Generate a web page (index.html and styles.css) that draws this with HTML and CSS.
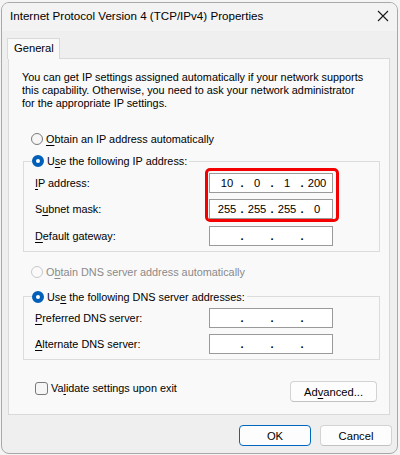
FILE: index.html
```html
<!DOCTYPE html>
<html>
<head>
<meta charset="utf-8">
<link rel="stylesheet" href="styles.css">
</head>
<body>
<div class="window">
  <div class="titlebar">
    <span class="title">Internet Protocol Version 4 (TCP/IPv4) Properties</span>
    <svg class="close" width="12" height="12" viewBox="0 0 12 12"><path d="M1 1L11 11M11 1L1 11" stroke="#1a1a1a" stroke-width="1.1" fill="none"/></svg>
  </div>
  <div class="body">
    <div class="tabs"><div class="tab">General</div></div>
    <div class="panel">
      <p class="intro">You can get IP settings assigned automatically if your network supports<br>this capability. Otherwise, you need to ask your network administrator<br>for the appropriate IP settings.</p>
      <div class="option first"><span class="radio"></span><span><u>O</u>btain an IP address automatically</span></div>
      <fieldset class="group ipgroup">
        <legend class="option"><span class="radio checked"></span><span>U<u>s</u>e the following IP address:</span></legend>
        <div class="row"><span class="label"><u>I</u>P address:</span><div class="ip"><span class="seg">10</span><span class="dot">.</span><span class="seg">0</span><span class="dot">.</span><span class="seg">1</span><span class="dot">.</span><span class="seg">200</span></div></div>
        <div class="row"><span class="label">S<u>u</u>bnet mask:</span><div class="ip"><span class="seg">255</span><span class="dot">.</span><span class="seg">255</span><span class="dot">.</span><span class="seg">255</span><span class="dot">.</span><span class="seg">0</span></div></div>
        <div class="row"><span class="label"><u>D</u>efault gateway:</span><div class="ip"><span class="seg"></span><span class="dot">.</span><span class="seg"></span><span class="dot">.</span><span class="seg"></span><span class="dot">.</span><span class="seg"></span></div></div>
        <div class="highlight"></div>
      </fieldset>
      <div class="option disabled dnsauto"><span class="radio"></span><span>O<u>b</u>tain DNS server address automatically</span></div>
      <fieldset class="group dnsgroup">
        <legend class="option"><span class="radio checked"></span><span>Us<u>e</u> the following DNS server addresses:</span></legend>
        <div class="row"><span class="label"><u>P</u>referred DNS server:</span><div class="ip"><span class="seg"></span><span class="dot">.</span><span class="seg"></span><span class="dot">.</span><span class="seg"></span><span class="dot">.</span><span class="seg"></span></div></div>
        <div class="row"><span class="label"><u>A</u>lternate DNS server:</span><div class="ip"><span class="seg"></span><span class="dot">.</span><span class="seg"></span><span class="dot">.</span><span class="seg"></span><span class="dot">.</span><span class="seg"></span></div></div>
      </fieldset>
      <div class="bottomrow">
        <div class="check"><span class="box"></span><span>Va<u>l</u>idate settings upon exit</span></div>
        <div class="btn adv">Ad<u>v</u>anced...</div>
      </div>
    </div>
    <div class="buttons">
      <div class="btn default">OK</div>
      <div class="btn">Cancel</div>
    </div>
  </div>
</div>
</body>
</html>
```
FILE: styles.css
```css
html, body {
  margin: 0;
  padding: 0;
  background: #f4f4f4;
}
body {
  font-family: "Liberation Sans", Arial, sans-serif;
  font-size: 10.85px;
  color: #000;
  width: 400px;
  height: 455px;
  overflow: hidden;
}
u { text-decoration-thickness: 1px; text-underline-offset: 2px; }
.window {
  margin: 2px 0 0 1px;
  width: 397px;
  height: 452px;
  box-sizing: border-box;
  border: 1px solid #a9a9a9;
  border-radius: 8px;
  background: #efefef;
  overflow: hidden;
  display: flex;
  flex-direction: column;
}
.titlebar {
  height: 28px;
  flex: none;
  background: #f3f3f3;
  display: flex;
  align-items: center;
  justify-content: space-between;
  padding: 0 8px 0 8px;
}
.title { font-size: 11.6px; line-height: 16px; margin-top: -3px; }
.close { margin-top: -2px; margin-right: 0; }
.body {
  flex: 1;
  padding: 7px 5px 0 5px;
  display: flex;
  flex-direction: column;
}
.tabs { display: flex; height: 20px; position: relative; z-index: 1; }
.tab {
  box-sizing: border-box;
  width: 53px;
  height: 21px;
  border: 1px solid #d9d9d9;
  border-bottom: none;
  background: #f9f9f9;
  padding-left: 6px;
  line-height: 19px;
  font-size: 11.2px;
}
.panel {
  box-sizing: border-box;
  margin-left: 1px;
  width: 382px;
  height: 357px;
  border: 1px solid #d9d9d9;
  background: #f9f9f9;
  padding: 12px 10px 0 13px;
  display: flex;
  flex-direction: column;
}
.intro {
  margin: 0;
  line-height: 13px;
  white-space: nowrap;
}
.option {
  display: flex;
  align-items: center;
  height: 16px;
  line-height: 16px;
  white-space: nowrap;
}
.option.first { margin: 21px 0 0 9px; }
.radio {
  box-sizing: border-box;
  width: 12px;
  height: 12px;
  border-radius: 50%;
  border: 1px solid #7a7a7a;
  background: #f6f6f6;
  margin-right: 3px;
  flex: none;
}
.radio.checked {
  border: 4px solid #005fb8;
  background: #fff;
}
.disabled { color: #8a8a8a; }
.disabled .radio { border-color: #c8c8c8; background: #fafafa; }
.group {
  margin: 6px 0 0 1px;
  width: 357px;
  box-sizing: border-box;
  border: 1px solid #dcdcdc;
  padding: 3.5px 0 5.5px 11px;
  display: flex;
  flex-direction: column;
  gap: 6.5px;
  position: relative;
  min-width: 0;
}
.group legend {
  padding: 0 2px 0 0;
  margin-left: -3px;
}
.dnsauto { margin: 11.5px 0 0 9px; }
.dnsgroup { margin-top: 9px; padding-top: 3.5px; padding-bottom: 5px; gap: 6px; }
.row {
  display: flex;
  align-items: center;
  height: 20px;
}
.label { width: 174px; flex: none; }
.ip {
  box-sizing: border-box;
  width: 124px;
  height: 20px;
  background: #fff;
  border: 1px solid #9a9a9a;
  display: flex;
  align-items: center;
  padding-left: 5px;
  line-height: 16px;
  font-size: 11.2px;
}
.seg { width: 24px; text-align: center; }
.dot { width: 6px; text-align: center; font-weight: bold; }
.highlight {
  position: absolute;
  left: 181px;
  top: -1px;
  width: 134px;
  height: 54px;
  box-sizing: border-box;
  border: 3px solid #f40000;
  border-radius: 5px;
}
.bottomrow {
  display: flex;
  justify-content: space-between;
  align-items: flex-start;
  margin-top: 20px;
  padding: 0 2px 0 13px;
}
.check { display: flex; align-items: center; height: 13px; line-height: 13px; margin-top: 2px; }
.box {
  box-sizing: border-box;
  width: 13px;
  height: 13px;
  border: 1px solid #7a7a7a;
  border-radius: 3px;
  background: #f6f6f6;
  margin-right: 3px;
}
.btn {
  box-sizing: border-box;
  height: 21px;
  border: 1px solid #d3d3d3;
  border-bottom-color: #c2c2c2;
  border-radius: 4px;
  background: #fdfdfd;
  display: flex;
  align-items: center;
  justify-content: center;
  line-height: 16px;
  font-size: 11.2px;
}
.adv { width: 87px; margin-top: 1px; }
.buttons {
  display: flex;
  justify-content: flex-end;
  gap: 9px;
  margin-top: 10px;
  padding-right: 0;
}
.buttons .btn { width: 72px; }
.btn.default { border: 1px solid #0067c0; }
```
